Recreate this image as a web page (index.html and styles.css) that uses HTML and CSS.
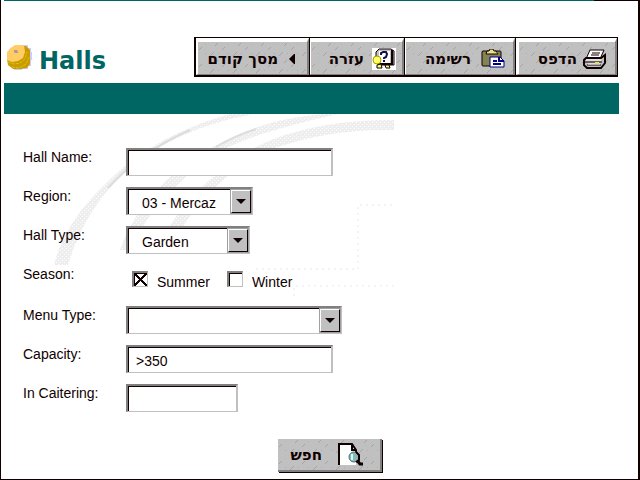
FILE: index.html
```html
<!DOCTYPE html>
<html lang="en">
<head>
    <meta charset="UTF-8">
    <meta name="viewport" content="width=device-width, initial-scale=1.0">
    <title>Halls</title>
    <link rel="stylesheet" href="styles.css">
</head>
<body>
    <div class="page">
        <header class="header">
            <div class="title">
                <svg class="ball" width="26" height="26" viewBox="0 0 26 26" aria-hidden="true">
                    <path d="M10 0h12v3h3v4h2v8h-2v6h-3v3h-6v1H8v-2l8-10z" fill="#ccccff"/>
                    <path d="M9 1h11l4 4v14l-3 4-7 1H7l-5-4-1-6V8l4-5z" fill="#cc9900"/>
                    <path d="M9 0h9l1 7-2 6-5 3-6 1-5-2V7l4-4z" fill="#ffcc66"/>
                    <path d="M2 17l6 2 6-1 5-4 2-7M6 22l7 1 7-4 3-7" fill="none" stroke="#cccc00" stroke-dasharray="3 1"/>
                    <path d="M8 5h3l1 2v1H9L8 7z" fill="#aa9999"/>
                </svg>
                <h1>Halls</h1>
            </div>
            <nav class="toolbar" dir="rtl" lang="he">
                <button type="button" class="tool tool-print">
                    <svg width="24" height="20" viewBox="0 0 24 20" aria-hidden="true">
                        <path d="M7 1h14l-4 9H3z" fill="#fff" stroke="#100000"/>
                        <path d="M9 4h8M8 6h8" stroke="#100000"/>
                        <path d="M3 9h15l4-3v8l-4 5H4l-3-3v-5z" fill="#c0c0c0" stroke="#100000" stroke-width="2"/>
                        <path d="M2 13h17M4 16h14" stroke="#100000"/>
                        <path d="M3 11h15M5 15h12" stroke="#fff"/>
                        <path d="M12 14h4" stroke="#e0e070" stroke-width="2"/>
                    </svg>
                    <span>הדפס</span>
                </button>
                <button type="button" class="tool tool-list">
                    <svg width="24" height="20" viewBox="0 0 24 20" aria-hidden="true">
                        <rect x="1" y="2" width="19" height="15" rx="1" fill="#848452" stroke="#100000"/>
                        <path d="M5 4h12M8 2h6" stroke="#e8e090" stroke-width="2"/>
                        <path d="M5 5h12l-2-3h-2l-1-2h-3L8 2H6z" fill="#e8e090" stroke="#100000"/>
                        <path d="M9 8h10l4 4v6H9z" fill="#fff" stroke="#000080"/>
                        <path d="M18 8v4h5M12 12h4M12 15h8" fill="none" stroke="#000080" stroke-width="2"/>
                    </svg>
                    <span>רשימה</span>
                </button>
                <button type="button" class="tool tool-help">
                    <svg width="24" height="22" viewBox="0 0 24 22" aria-hidden="true">
                        <path d="M0 0h24v22H0z" fill="#fff"/>
                        <path d="M7 1h12l3 2v14H7L4 14V4z" fill="#c0c0c0" stroke="#100000"/>
                        <path d="M7 3h11v12H7z" fill="#fff"/>
                        <path d="M20 2v15M6 16h14" stroke="#100000" stroke-width="2"/>
                        <path d="M9 7V5l2-1h3l1 2-1 3-2 1v1M11 13h2" fill="none" stroke="#101050" stroke-width="2"/>
                        <circle cx="5" cy="12" r="4" fill="#ffff66" stroke="#a0a000"/>
                        <path d="M5 17l4-1 1 4H5zM13 17h4l1 3h-4z" fill="#ffff66" stroke="#100000"/>
                    </svg>
                    <span>עזרה</span>
                </button>
                <button type="button" class="tool tool-back">
                    <svg width="8" height="10" viewBox="0 0 8 10" aria-hidden="true">
                        <path d="M1 5l5-5h1v10H6z" fill="#100000"/>
                    </svg>
                    <span>מסך קודם</span>
                </button>
            </nav>
        </header>
        <div class="band"></div>

        <main class="content">
            <svg class="swirl" width="400" height="200" viewBox="0 0 400 200" aria-hidden="true">
                <defs>
                    <pattern id="dots" width="4" height="4" patternUnits="userSpaceOnUse">
                        <path d="M0 0h4v4H0z" fill="#eee"/>
                        <path d="M0 0h1v1H0zM2 2h1v1H2z" fill="#fff"/>
                    </pattern>
                </defs>
                <path d="M50 151C60 112 86 82 122 51C156 25 190 10 226 0H250C212 7 172 20 134 47C96 78 76 112 64 151z" fill="url(#dots)"/>
                <path d="M104 74C122 54 150 32 186 16" fill="none" stroke="#ddd" stroke-width="2"/>
                <path d="M116 136C132 92 164 58 209 33C242 14 280 3 320 0H334C294 9 250 20 218 36C178 63 144 93 128 136z" fill="url(#dots)"/>
                <path d="M156 129C174 93 208 58 252 33C292 13 340 6 390 6V16C340 15 299 23 260 38C219 61 190 89 170 129z" fill="url(#dots)"/>
                <path d="M212 33C222 27 234 21 252 15" fill="none" stroke="#ddd" stroke-width="2"/>
                <path d="M388 91h-34v64H250M390 172H290v14" fill="none" stroke="#e8e8e8" stroke-dasharray="2 4"/>
            </svg>

            <form class="form">
                <div class="row">
                    <label for="hallName">Hall Name:</label>
                    <input type="text" id="hallName" class="field field-long">
                </div>
                <div class="row">
                    <label for="region">Region:</label>
                    <div class="select select-region">
                        <select id="region"><option>03 - Mercaz</option></select>
                        <span class="arrow"></span>
                    </div>
                </div>
                <div class="row">
                    <label for="hallType">Hall Type:</label>
                    <div class="select select-type">
                        <select id="hallType"><option>Garden</option></select>
                        <span class="arrow"></span>
                    </div>
                </div>
                <div class="row row-season" role="group" aria-labelledby="season">
                    <span class="label" id="season">Season:</span>
                    <div class="checks">
                        <input type="checkbox" id="summer" checked>
                        <label for="summer">Summer</label>
                        <input type="checkbox" id="winter">
                        <label for="winter">Winter</label>
                    </div>
                </div>
                <div class="row">
                    <label for="menuType">Menu Type:</label>
                    <div class="select select-menu">
                        <select id="menuType"><option></option></select>
                        <span class="arrow"></span>
                    </div>
                </div>
                <div class="row">
                    <label for="capacity">Capacity:</label>
                    <input type="text" id="capacity" class="field field-long" value="&gt;350">
                </div>
                <div class="row">
                    <label for="catering">In Caitering:</label>
                    <input type="text" id="catering" class="field field-short">
                </div>
                <button type="button" class="search" dir="rtl" lang="he">
                    <svg width="26" height="23" viewBox="0 0 26 23" aria-hidden="true">
                        <path d="M1 1h13l4 5v16H1z" fill="#fff"/>
                        <path d="M1 22V1h13l4 6v3M14 1v6h4" fill="none" stroke="#100000" stroke-width="2"/>
                        <path d="M18 16l4 5h3" fill="none" stroke="#100000" stroke-width="3"/>
                        <circle cx="16" cy="14" r="5" fill="#8cb8b8" stroke="#507070"/>
                        <path d="M18 9l3 3v5l-3 2" fill="none" stroke="#100000" stroke-width="2"/>
                        <path d="M14 11v6" stroke="#c8ffff" stroke-width="2"/>
                    </svg>
                    <span>חפש</span>
                </button>
            </form>
        </main>
    </div>
</body>
</html>
```
FILE: styles.css
```css
* {
    box-sizing: border-box;
}
body {
    margin: 0;
    background-color: #fff;
    color: #100000;
    font-family: "Liberation Sans", Arial, sans-serif;
    font-size: 14px;
}
.page {
    min-height: 100vh;
    padding-left: 3px;
    border-left: 1px solid #100000;
    border-right: 2px solid #100000;
    border-bottom: 1px solid #100000;
}
.header {
    display: flex;
    justify-content: space-between;
    align-items: flex-end;
    height: 83px;
    padding: 0 20px 6px 2px;
    background: linear-gradient(to right, #006663 93%, #100000 93%) top / 100% 1px no-repeat;
}
.title {
    display: flex;
    align-items: center;
    gap: 7px;
}
.ball {
    margin-bottom: 6px;
}
h1 {
    margin: 0;
    color: #006663;
    font-family: "DejaVu Sans", Verdana, sans-serif;
    font-size: 24px;
    line-height: 26px;
}
.toolbar {
    display: flex;
    height: 40px;
    border: 1px solid #100000;
    border-left-width: 2px;
    border-bottom-width: 2px;
}
button {
    display: flex;
    align-items: center;
    color: #100000;
    background-color: #c0c0c0;
    background-image: url("data:image/svg+xml,%3Csvg xmlns='http://www.w3.org/2000/svg' width='23' height='17'%3E%3Cpath d='M1 8l3-3M12 14l4-4M17 4l3-3' stroke='%23a4a4a4'/%3E%3Cpath d='M7 2h1v1H7z' fill='%2398c8a0'/%3E%3Cpath d='M20 11h1v1h-1z' fill='%23c0a0c8'/%3E%3Cpath d='M7 11h1v1H7z' fill='%2390b8b8'/%3E%3C/svg%3E");
    font-family: "DejaVu Sans", Verdana, sans-serif;
    font-size: 15px;
    font-weight: bold;
    white-space: nowrap;
    border: none;
    cursor: pointer;
}
button svg {
    flex-shrink: 0;
}
.tool {
    gap: 8px;
    padding: 2px 8px 0;
    border-top: 4px solid #fff;
    border-left: 2px solid #fff;
    border-right: 2px solid #808080;
    border-bottom: 1px solid #808080;
    box-shadow: 1px 0 #100000;
}
.tool-print {
    width: 102px;
    gap: 6px;
    border-left-width: 4px;
}
.tool-list {
    width: 111px;
    gap: 10px;
}
.tool-help {
    width: 95px;
    padding: 2px 6px 0;
}
.tool-back {
    width: 113px;
    gap: 10px;
    padding: 2px 11px 0;
}
.band {
    height: 31px;
    margin-right: 19px;
    background-color: #006663;
}
.content {
    position: relative;
    padding: 34px 19px 5px;
}
.swirl {
    position: absolute;
    top: 0;
    left: 0;
}
.form {
    position: relative;
    display: grid;
    gap: 11px;
}
.row {
    display: grid;
    grid-template-columns: 103px 1fr;
    height: 28px;
}
.row-season {
    height: 30px;
}
label,
.label {
    line-height: 18px;
}
.field,
select {
    height: 28px;
    background-color: #fff;
    color: #100000;
    font-family: inherit;
    font-size: 14px;
    border: 2px solid #c0c0c0;
    border-top-color: #808080;
    border-left-color: #808080;
    border-bottom-width: 1px;
    border-radius: 0;
    box-shadow: inset 1px 1px #100000;
}
.field {
    padding: 3px 8px 0;
}
.field-long {
    width: 207px;
}
.field-short {
    width: 112px;
}
.select {
    position: relative;
}
.select-region {
    width: 127px;
}
.select-type {
    width: 124px;
}
.select-menu {
    width: 216px;
}
select {
    width: 100%;
    padding: 2px 24px 0 14px;
    appearance: none;
}
.arrow {
    position: absolute;
    top: 2px;
    right: 1px;
    bottom: 1px;
    display: grid;
    place-items: center;
    width: 22px;
    background-color: #c0c0c0;
    border: 2px solid #100000;
    border-top-color: #fff;
    border-left-color: #fff;
    outline: 1px solid #a0a0a0;
    outline-offset: -1px;
    pointer-events: none;
}
.arrow::before {
    content: "";
    border: 5px solid transparent;
    border-top-color: #100000;
    border-bottom: none;
}
.checks {
    display: flex;
    align-items: flex-end;
    padding: 0 6px 5px;
}
.checks input {
    width: 16px;
    height: 16px;
    margin: 0 9px 3px 0;
    background-color: #fff;
    border: 2px solid #808080;
    border-right: 1px solid #c0c0c0;
    border-bottom: 1px solid #c0c0c0;
    box-shadow: inset 1px 1px #100000;
    appearance: none;
}
.checks input:checked {
    background-image:
        linear-gradient(45deg, transparent 46%, #100000 46%, #100000 54%, transparent 54%),
        linear-gradient(-45deg, transparent 46%, #100000 46%, #100000 54%, transparent 54%);
}
.checks label {
    margin-right: 17px;
    line-height: 16px;
}
.search {
    gap: 16px;
    width: 104px;
    height: 33px;
    margin: 16px 0 0 255px;
    padding: 0 16px 0 8px;
    border-right: 2px solid #808080;
    border-bottom: 2px solid #808080;
    box-shadow: 1px 1px #100000;
}
```
